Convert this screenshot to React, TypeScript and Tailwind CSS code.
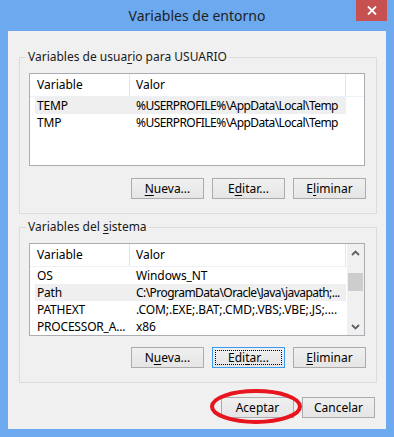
import type { ReactNode } from 'react';

type Row = { name: string; value: string; selected?: boolean };

const userVars: Row[] = [
  { name: 'TEMP', value: '%USERPROFILE%\\AppData\\Local\\Temp', selected: true },
  { name: 'TMP', value: '%USERPROFILE%\\AppData\\Local\\Temp' },
];

const systemVars: Row[] = [
  { name: 'OS', value: 'Windows_NT' },
  { name: 'Path', value: 'C:\\ProgramData\\Oracle\\Java\\javapath;...', selected: true },
  { name: 'PATHEXT', value: '.COM;.EXE;.BAT;.CMD;.VBS;.VBE;.JS;....' },
  { name: 'PROCESSOR_A...', value: 'x86' },
];

function Btn({ children, focused }: { children: ReactNode; focused?: boolean }) {
  return (
    <button
      className={
        focused
          ? 'w-[73px] h-[21px] flex items-center justify-center border border-[#3c9bea] bg-gradient-to-b from-[#f0f0f0] to-[#e5e5e5] text-black outline-1 outline-dotted outline-black outline-offset-[-4px]'
          : 'w-[73px] h-[21px] flex items-center justify-center border border-[#acacac] bg-gradient-to-b from-[#f0f0f0] to-[#e5e5e5] text-black'
      }
    >
      {children}
    </button>
  );
}

function Chevron({ down }: { down?: boolean }) {
  return (
    <svg width="9" height="6" viewBox="0 0 9 6" className={down ? 'rotate-180' : ''}>
      <path d="M1 5 L4.5 1.5 L8 5" fill="none" stroke="#606060" strokeWidth="1.8" />
    </svg>
  );
}

function VarList({ rows, scroll }: { rows: Row[]; scroll?: boolean }) {
  return (
    <div className="w-[336px] h-[93px] border border-[#abadb3] bg-white flex overflow-hidden">
      <div className="flex-1 flex flex-col min-w-0">
        <div className="h-[23px] shrink-0 flex border-b border-[#eef1f5]">
          <div className="w-[100px] pl-[7px] flex items-center border-r border-[#e5e5e5]">Variable</div>
          <div className="w-[216px] pl-[6px] flex items-center border-r border-[#e5e5e5]">Valor</div>
        </div>
        {rows.map((r) => (
          <div
            key={r.name}
            className={
              r.selected
                ? 'ml-[5px] w-[311px] h-[17px] shrink-0 flex items-center bg-[#efefef]'
                : 'ml-[5px] w-[311px] h-[17px] shrink-0 flex items-center'
            }
          >
            <div className="w-[99px] pl-[2px] whitespace-nowrap overflow-hidden tracking-[-0.2px]">{r.name}</div>
            <div
              className={
                r.value.includes('\\')
                  ? 'flex-1 pl-[2px] whitespace-nowrap overflow-hidden tracking-[-0.55px]'
                  : 'flex-1 pl-[2px] whitespace-nowrap overflow-hidden tracking-[-0.1px]'
              }
            >
              {r.value}
            </div>
          </div>
        ))}
      </div>
      {scroll && (
        <div className="w-[17px] shrink-0 bg-[#f0f0f0] flex flex-col">
          <div className="h-[17px] flex items-center justify-center">
            <Chevron />
          </div>
          <div className="flex-1">
            <div className="mt-[12px] mx-[1px] h-[18px] bg-[#cdcdcd]" />
          </div>
          <div className="h-[17px] flex items-center justify-center">
            <Chevron down />
          </div>
        </div>
      )}
    </div>
  );
}

function Group({ label, children, className }: { label: ReactNode; children: ReactNode; className?: string }) {
  return (
    <fieldset className={'w-[358px] min-w-0 border border-[#dcdcdc] px-[9px] pt-[8px] pb-[14px] ' + (className ?? '')}>
      <legend className="ml-[-3px] px-[2px] leading-[16px] text-[#1a1a1a]">{label}</legend>
      {children}
    </fieldset>
  );
}

export default function App() {
  return (
    <div className="w-[394px] h-[437px] bg-[#6ca9ef] flex flex-col font-['Noto_Sans',sans-serif] text-[12px] text-black">
      <div className="h-[31px] shrink-0 relative flex items-center justify-center">
        <span className="text-[14px] text-[#1f1f1f] leading-none">Variables de entorno</span>
        <div className="absolute right-[7px] top-0 w-[31px] h-[21px] bg-[#c75050] flex items-center justify-center">
          <svg width="10" height="9" viewBox="0 0 10 9">
            <path d="M1 0.5 L9 8.5 M9 0.5 L1 8.5" stroke="white" strokeWidth="1.8" />
          </svg>
        </div>
      </div>
      <div className="mx-[8px] flex-1 bg-[#f0f0f0] flex flex-col pt-[18px] pl-[11px]">
        <Group
          label={
            <>
              Variables de usua<u className="underline-offset-2">r</u>io para USUARIO
            </>
          }
        >
          <VarList rows={userVars} />
          <div className="mt-[12px] flex justify-end gap-[8px] pr-[1px]">
            <Btn>
              <u className="underline-offset-2">N</u>ueva...
            </Btn>
            <Btn>
              E<u className="underline-offset-2">d</u>itar...
            </Btn>
            <Btn>
              E<u className="underline-offset-2">l</u>iminar
            </Btn>
          </div>
        </Group>
        <Group
          className="mt-[5px]"
          label={
            <>
              Variables del <u className="underline-offset-2">s</u>istema
            </>
          }
        >
          <VarList rows={systemVars} scroll />
          <div className="mt-[11px] flex justify-end gap-[8px] pr-[1px]">
            <Btn>
              N<u className="underline-offset-2">u</u>eva...
            </Btn>
            <Btn focused>
              Edi<u className="underline-offset-2">t</u>ar...
            </Btn>
            <Btn>
              <u className="underline-offset-2">E</u>liminar
            </Btn>
          </div>
        </Group>
        <div className="w-[358px] mt-[14px] flex justify-end gap-[8px] pr-[2px]">
          <div className="relative">
            <Btn>Aceptar</Btn>
            <svg className="absolute left-[-11px] top-[-8px]" width="92" height="35" viewBox="0 0 92 35">
              <ellipse cx="46" cy="17.5" rx="44" ry="15.5" fill="none" stroke="#e8141e" strokeWidth="4" />
            </svg>
          </div>
          <Btn>Cancelar</Btn>
        </div>
      </div>
      <div className="h-[8px] shrink-0" />
    </div>
  );
}
